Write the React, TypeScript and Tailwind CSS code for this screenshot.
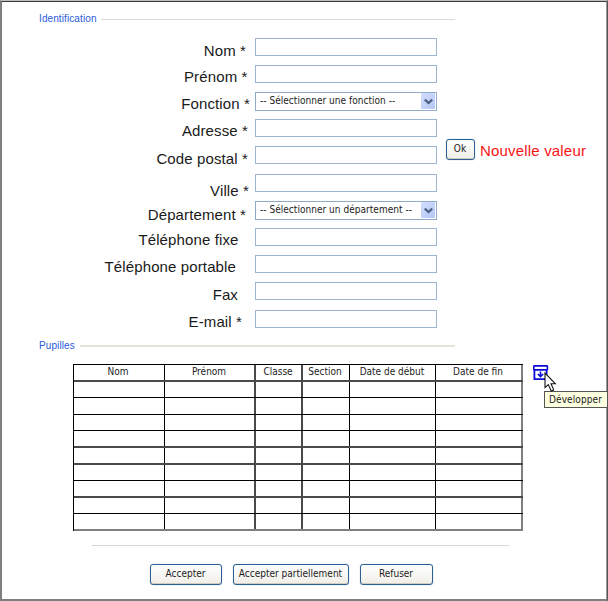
import type { ReactNode } from "react";

type Field = { label: string; row: string; text: string; select?: string };

const fields: Field[] = [
  { label: "Nom *", row: "h-[27px]", text: "pt-[4px] pr-[9px]" },
  { label: "Prénom *", row: "h-[27px]", text: "pt-[3px] pr-[7.5px]" },
  { label: "Fonction *", row: "h-[27px]", text: "pt-[3px] pr-[5px]", select: "-- Sélectionner une fonction --" },
  { label: "Adresse *", row: "h-[27px]", text: "pt-[3px] pr-[7px]" },
  { label: "Code postal *", row: "h-[28px]", text: "pt-[4px] pr-[7px]" },
  { label: "Ville *", row: "h-[27px]", text: "pt-[8px] pr-[6px]" },
  { label: "Département *", row: "h-[27px]", text: "pt-[5px] pr-[9px]", select: "-- Sélectionner un département --" },
  { label: "Téléphone fixe", row: "h-[27px]", text: "pt-[3px] pr-[16.5px]" },
  { label: "Téléphone portable", row: "h-[27px]", text: "pt-[3px] pr-[19px]" },
  { label: "Fax", row: "h-[28px]", text: "pt-[4px] pr-[17px]" },
  { label: "E-mail *", row: "h-[27px]", text: "pt-[3px] pr-[13px]" },
];

const columns = [
  { name: "Nom", cls: "w-[91px] border-r border-r-black pr-[2px]" },
  { name: "Prénom", cls: "w-[91px] border-r-2 border-r-[#4a4a4a] pr-[1px]" },
  { name: "Classe", cls: "w-[47px] border-r-2 border-r-[#4a4a4a] pr-[1px]" },
  { name: "Section", cls: "w-[47px] border-r border-r-black pr-[2px]" },
  { name: "Date de début", cls: "w-[86px] border-r border-r-black pr-[1px]" },
  { name: "Date de fin", cls: "w-[87px] border-r-2 border-r-[#7f7f7f] pr-[1px]" },
];

const rows = [
  "h-[17px] border-b-2 border-b-[#4a4a4a]",
  "h-[16px] border-b border-b-black",
  "h-[17px] border-b border-b-black",
  "h-[16px] border-b border-b-black",
  "h-[17px] border-b-2 border-b-[#4a4a4a]",
  "h-[17px] border-b-2 border-b-[#4a4a4a]",
  "h-[16px] border-b border-b-black",
  "h-[17px] border-b-2 border-b-[#4a4a4a]",
  "h-[16px] border-b border-b-black",
  "h-[17px] border-b-2 border-b-[#7f7f7f]",
];

const ui = "font-['DejaVu_Sans_Condensed','DejaVu_Sans',sans-serif] [font-stretch:condensed] text-[10px] text-[#1c1c1c] whitespace-nowrap";

function Legend({ children, line }: { children: ReactNode; line: string }) {
  return (
    <div className="flex h-[12px] w-[416px] items-center">
      <span className="text-[10px] leading-[12px] tracking-[0.1px] text-[#2a5bd7]">{children}</span>
      <span className={`flex-1 ${line}`} />
    </div>
  );
}

function Chevron() {
  return (
    <span className="flex h-[16px] w-[14px] items-center justify-center rounded-[1px] bg-linear-to-br from-[#d3defc] to-[#b4c6f6]">
      <svg width="9" height="7" viewBox="0 0 9 7" fill="none" stroke="#4d6185" strokeWidth="2.2">
        <path d="M0.8 1.6L4.5 5.1L8.2 1.6" />
      </svg>
    </span>
  );
}

function Button({ children, size }: { children: ReactNode; size: string }) {
  return (
    <button
      className={`${ui} ${size} flex justify-center rounded-[3px] border border-[#2c5f93] bg-linear-to-b from-white to-[#efeee8] pt-px pr-px shadow-[inset_0_-1px_0_#d2ccc0,0_0_1px_#6d94bb]`}
    >
      {children}
    </button>
  );
}

export default function App() {
  return (
    <div className="h-[601px] w-[608px] overflow-hidden border border-t-[#bdbdbd] border-r-[#555555] border-b-[#7f7f7f] border-l-[#7f7f7f] bg-white font-['Liberation_Sans',Arial,sans-serif]">
      <div className="relative h-full border border-t-[#3a3a3a] border-r-[#9a9a9a] border-b-[#7f7f7f] border-l-[#7f7f7f]">
        <div className="pt-[11px] pl-[37px]">
          <Legend line="ml-[4px] h-px bg-[#dcdcd2]">Identification</Legend>
        </div>
        <div className="flex pt-[13px]">
          <div>
            {fields.map((f) => (
              <div key={f.label} className={`flex ${f.row}`}>
                <div className={`w-[253px] text-right text-[15px] leading-[18px] tracking-[0.12px] whitespace-nowrap text-[#1a1a1a] ${f.text}`}>
                  {f.label}
                </div>
                {f.select ? (
                  <div className="flex h-[19px] w-[182px] justify-between border border-[#8fabc8] pr-px">
                    <span className={`${ui} pl-[4px] leading-[15px] tracking-[0.03px]`}>{f.select}</span>
                    <Chevron />
                  </div>
                ) : (
                  <div className="h-[18px] w-[182px] border border-[#9bb4d0]" />
                )}
              </div>
            ))}
          </div>
          <div className="flex h-[22px] gap-[5px] pt-[101px] pl-[9px]">
            <Button size="h-[21px] w-[29px]">Ok</Button>
            <span className="pt-[3px] text-[15px] leading-[18px] tracking-[0.18px] whitespace-nowrap text-[#f81414]">Nouvelle valeur</span>
          </div>
        </div>
        <div className="pt-[3px] pl-[37px]">
          <Legend line="ml-[5px] h-[2px] bg-[#e4e4dc]">Pupilles</Legend>
        </div>
        <div className="flex pt-[12px] pl-[71px]">
          <div className="border-t border-l border-black">
            {rows.map((r, i) => (
              <div key={i} className={`flex ${r}`}>
                {columns.map((c) => (
                  <div key={c.name} className={`${ui} ${c.cls} flex justify-center leading-[14px]`}>
                    {i === 0 ? c.name : ""}
                  </div>
                ))}
              </div>
            ))}
          </div>
          <svg className="ml-[9px]" width="17" height="18" viewBox="0 0 17 18" fill="none" stroke="#0c0cd8">
            <rect x="1.8" y="1.9" width="13.6" height="4" rx="0.6" strokeWidth="1.6" />
            <path d="M2.4 6V15.2H14.6V6" strokeWidth="1.8" />
            <path d="M8.5 7.6V12M5.8 10L8.5 12.6L11.2 10" strokeWidth="1.6" />
          </svg>
        </div>
        <div className="mt-[14px] ml-[90px] h-px w-[417px] bg-[#d8d8ce]" />
        <div className="flex gap-[11px] pt-[18px] pl-[148px]">
          <Button size="h-[21px] w-[72px]">Accepter</Button>
          <Button size="h-[21px] w-[116px]">Accepter partiellement</Button>
          <Button size="h-[21px] w-[73px]">Refuser</Button>
        </div>
        <div className={`${ui} absolute top-[389px] left-[542px] h-[17px] w-[64px] border border-[#555550] bg-[#ffffe1] pl-[4px] leading-[15px] tracking-[0.1px]`}>
          Développer
        </div>
        <svg className="absolute top-[370px] left-[542px]" width="13" height="21" viewBox="0 0 13 21">
          <path d="M1 1V15.5L4.3 12.6L7.2 19L9.7 17.9L7 11.7H11.3Z" fill="white" stroke="#111" strokeWidth="1.1" />
        </svg>
      </div>
    </div>
  );
}
